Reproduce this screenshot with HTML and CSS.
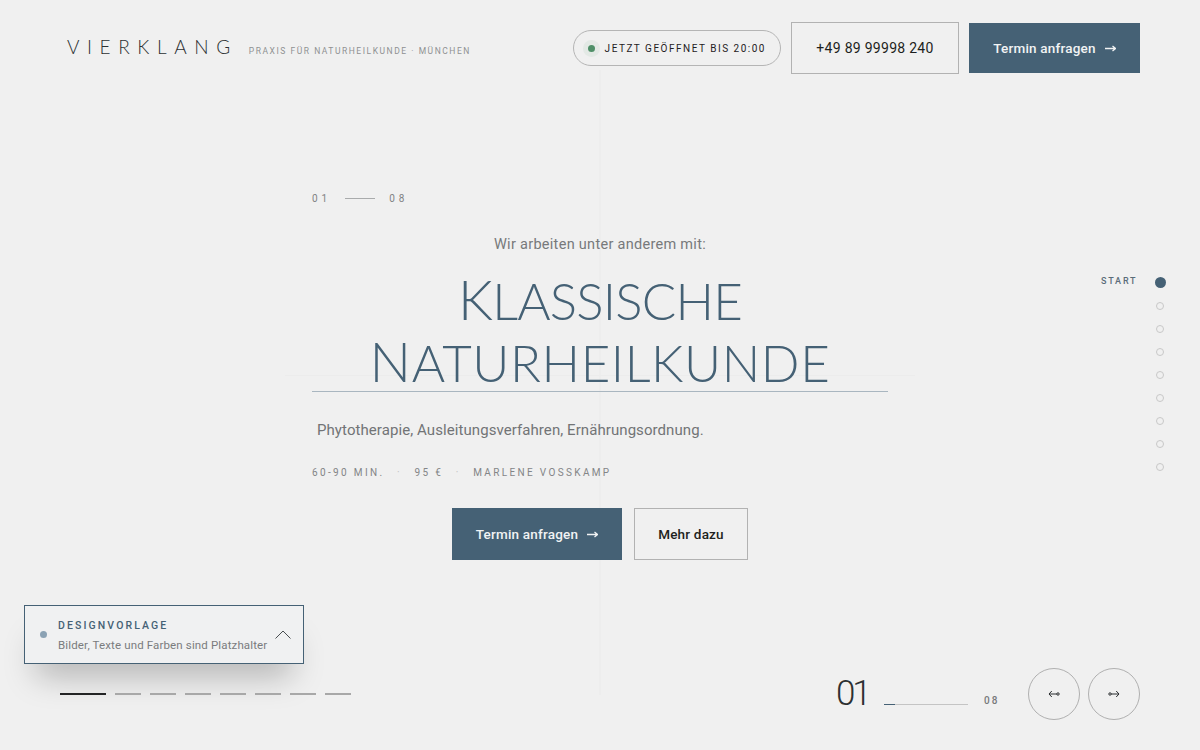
FILE: index.html
```html
<!DOCTYPE html>
<html lang="de">
<head>
  <title>Vierklang - Praxis für Naturheilkunde</title>
  <link rel="stylesheet" href="styles.css">
</head>
<body>
  <div class="page">
    <div class="cross-v"></div>
    <div class="cross-h"></div>

    <header class="top">
      <div class="brand">
        <span class="logo">VIERKLANG</span>
        <span class="tagline">PRAXIS FÜR NATURHEILKUNDE · MÜNCHEN</span>
      </div>
      <div class="top-actions">
        <div class="open-pill"><span class="open-dot"></span>JETZT GEÖFFNET BIS 20:00</div>
        <a class="btn btn-outline btn-phone">+49 89 99998 240</a>
        <a class="btn btn-primary btn-head">Termin anfragen
          <svg class="arrow" width="11" height="7" viewBox="0 0 11 7" fill="none" stroke="currentColor" stroke-width="1.300"><path d="M0 3.500h10M7.500 1l3 2.500-3 2.500"/></svg>
        </a>
      </div>
    </header>

    <main class="hero">
      <div class="counter"><span>01</span><i></i><span>08</span></div>
      <p class="intro">Wir arbeiten unter anderem mit:</p>
      <h1><span>Klassische</span><span>Naturheilkunde</span></h1>
      <p class="lead">Phytotherapie, Ausleitungsverfahren, Ernährungsordnung.</p>
      <div class="meta"><span>60-90 MIN.</span><b>·</b><span>95 €</span><b>·</b><span>MARLENE VOSSKAMP</span></div>
      <div class="hero-actions">
        <a class="btn btn-primary btn-big">Termin anfragen
          <svg class="arrow" width="11" height="7" viewBox="0 0 11 7" fill="none" stroke="currentColor" stroke-width="1.300"><path d="M0 3.500h10M7.500 1l3 2.500-3 2.500"/></svg>
        </a>
        <a class="btn btn-outline btn-more">Mehr dazu</a>
      </div>
    </main>

    <nav class="side-nav">
      <span class="side-label">START</span>
      <ul>
        <li class="active"></li><li></li><li></li><li></li><li></li><li></li><li></li><li></li><li></li>
      </ul>
    </nav>

    <div class="notice">
      <span class="notice-dot"></span>
      <div class="notice-text">
        <strong>DESIGNVORLAGE</strong>
        <span>Bilder, Texte und Farben sind Platzhalter</span>
      </div>
      <svg width="16" height="9" viewBox="0 0 16 9" fill="none" stroke="#4a4f52" stroke-width="1"><path d="M.5 8.500 8 1l7.500 7.500"/></svg>
    </div>

    <div class="tabs">
      <i class="on"></i><i></i><i></i><i></i><i></i><i></i><i></i><i></i>
    </div>

    <div class="pager">
      <span class="pager-now">01</span>
      <div class="pager-track"><i></i></div>
      <span class="pager-total">08</span>
      <button class="round">
        <svg width="12" height="8" viewBox="0 0 12 8" fill="none" stroke="#2b2e30" stroke-width="1"><path d="M9 4H1M3.800 1 1 4l2.800 3"/><circle cx="10" cy="4" r="1.200"/></svg>
      </button>
      <button class="round">
        <svg width="12" height="8" viewBox="0 0 12 8" fill="none" stroke="#2b2e30" stroke-width="1"><path d="M3 4h8M8.200 1 11 4 8.200 7"/><circle cx="2" cy="4" r="1.200"/></svg>
      </button>
    </div>
  </div>
</body>
</html>
```

FILE: styles.css
```css
* {
  box-sizing: border-box;
}
html, body {
  margin: 0;
  height: 100%;
}
body {
  background: #f0f0f0;
  font-family: "Roboto", "Liberation Sans", sans-serif;
  color: #1d1f20;
  overflow: hidden;
}
.page {
  position: relative;
  width: 1200px;
  height: 750px;
  overflow: hidden;
}
.cross-v {
  position: absolute;
  left: 599px;
  top: 70px;
  width: 2px;
  height: 625px;
  background: #ededed;
}
.cross-h {
  position: absolute;
  left: 285px;
  top: 375px;
  width: 630px;
  height: 1px;
  background: #ececec;
}

/* header */
.top {
  position: relative;
  display: flex;
  justify-content: space-between;
  align-items: center;
  padding: 22px 60px 0 67px;
}
.brand {
  display: flex;
  align-items: baseline;
  gap: 11px;
  margin-top: -3px;
}
.logo {
  font-family: "Lato", sans-serif;
  font-weight: 300;
  font-size: 19px;
  letter-spacing: 0.4em;
  color: #2d3032;
}
.tagline {
  font-size: 8.500px;
  letter-spacing: 0.18em;
  color: #8f9192;
}
.top-actions {
  display: flex;
  align-items: center;
  gap: 10px;
}
.open-pill {
  display: flex;
  align-items: center;
  height: 36px;
  padding: 0 14px;
  border: 1px solid #b5b5b5;
  border-radius: 18px;
  font-size: 10px;
  letter-spacing: 0.15em;
  color: #1f2123;
}
.open-dot {
  width: 7px;
  height: 7px;
  margin-right: 10px;
  border-radius: 50%;
  background: #4f8f68;
  box-shadow: 0 0 0 5px #e3e9e5;
}
.btn {
  display: inline-flex;
  align-items: center;
  justify-content: center;
  font-size: 13.500px;
  font-weight: 500;
  letter-spacing: 0.015em;
}
.btn-primary {
  background: #456175;
  color: #f1f3f4;
}
.btn-outline {
  border: 1px solid #b2b2b2;
  color: #1d1f20;
}
.btn-phone {
  width: 168px;
  height: 52px;
  font-size: 14px;
  font-weight: 400;
  letter-spacing: 0.02em;
}
.btn-head {
  width: 171px;
  height: 50px;
}
.arrow {
  margin-left: 9px;
}

/* hero */
.hero {
  position: relative;
  width: 576px;
  margin: 119px auto 0;
  text-align: center;
}
.counter {
  display: flex;
  align-items: center;
  gap: 14px;
  font-size: 10px;
  letter-spacing: 0.4em;
  color: #808284;
}
.counter i {
  width: 30px;
  height: 1px;
  background: #a9abac;
}
.intro {
  margin: 32px 0 0;
  font-size: 14.500px;
  line-height: 18px;
  letter-spacing: 0.02em;
  color: #77797b;
}
h1 {
  margin: 16px 0 0;
  border-bottom: 1px solid #a9b6c0;
  font-family: "Lato", sans-serif;
  font-weight: 300;
  font-size: 51px;
  line-height: 58px;
  text-transform: uppercase;
  color: #456175;
}
h1 span {
  display: block;
  margin-bottom: -1px;
  letter-spacing: 0.6px;
}
h1 span:first-child {
  margin-bottom: 2px;
  letter-spacing: -0.8px;
}
h1 span::first-letter {
  font-size: 55px;
}
.lead {
  margin: 28px 0 0;
  padding-left: 5px;
  font-size: 15px;
  line-height: 20px;
  letter-spacing: 0.005em;
  text-align: left;
  color: #727476;
}
.meta {
  display: flex;
  gap: 12.500px;
  margin-top: 27px;
  font-size: 10px;
  letter-spacing: 0.235em;
  color: #838587;
}
.meta b {
  font-weight: 400;
  color: #c0c0c0;
}
.hero-actions {
  display: flex;
  justify-content: center;
  gap: 12px;
  margin-top: 30px;
}
.btn-big {
  width: 170px;
  height: 52px;
}
.btn-more {
  width: 114px;
  height: 52px;
}

/* dots on the right */
.side-nav {
  position: absolute;
  left: 1101px;
  top: 275px;
  display: flex;
  gap: 17px;
}
.side-label {
  font-size: 9px;
  line-height: 12px;
  font-weight: 500;
  letter-spacing: 0.2em;
  color: #5a6c79;
}
.side-nav ul {
  display: flex;
  flex-direction: column;
  align-items: center;
  gap: 15px;
  width: 12px;
  margin: 2px 0 0;
  padding: 0;
  list-style: none;
}
.side-nav li {
  width: 8px;
  height: 8px;
  border: 1.500px solid #c8c8c8;
  border-radius: 50%;
}
.side-nav li.active {
  width: 11px;
  height: 11px;
  margin-bottom: -1px;
  border: 0;
  background: #456175;
}

/* notice card */
.notice {
  position: absolute;
  left: 24px;
  top: 605px;
  display: flex;
  align-items: center;
  width: 280px;
  height: 59px;
  padding: 0 12px 0 15px;
  border: 1px solid #456175;
  background: #f0f1f2;
  box-shadow: 0 24px 32px -12px rgba(0, 0, 0, 0.26);
}
.notice-dot {
  width: 7px;
  height: 7px;
  margin-right: 11px;
  border-radius: 50%;
  background: #8ba2b4;
}
.notice-text {
  display: flex;
  flex-direction: column;
  gap: 6px;
  flex: 1;
  margin-top: 2px;
}
.notice-text strong {
  font-size: 10.500px;
  font-weight: 500;
  letter-spacing: 0.2em;
  color: #456175;
}
.notice-text span {
  font-size: 11.500px;
  letter-spacing: 0.012em;
  color: #7a7c7e;
}

/* slide tabs */
.tabs {
  position: absolute;
  left: 60px;
  top: 693px;
  display: flex;
  gap: 9px;
}
.tabs i {
  width: 26px;
  height: 2px;
  background: #a8a8a8;
}
.tabs i.on {
  width: 46px;
  background: #232425;
}

/* pager */
.pager {
  position: absolute;
  right: 60px;
  top: 668px;
  display: flex;
  align-items: center;
}
.pager-now {
  width: 47px;
  margin-top: -2px;
  text-indent: -1px;
  font-weight: 300;
  font-size: 35px;
  letter-spacing: -0.09em;
  color: #2d3032;
}
.pager-track {
  width: 84px;
  height: 1px;
  margin-top: 20px;
  background: #c4c4c4;
}
.pager-track i {
  display: block;
  width: 11px;
  height: 1px;
  background: #456175;
}
.pager-total {
  width: 60px;
  margin-top: 13px;
  padding-left: 16px;
  font-size: 10px;
  font-weight: 500;
  letter-spacing: 0.2em;
  color: #77797b;
}
.round {
  display: flex;
  align-items: center;
  justify-content: center;
  width: 52px;
  height: 52px;
  margin-left: 8px;
  padding: 0;
  border: 1px solid #b0b0b0;
  border-radius: 50%;
  background: transparent;
}
.pager-total + .round {
  margin-left: 0;
}
```
